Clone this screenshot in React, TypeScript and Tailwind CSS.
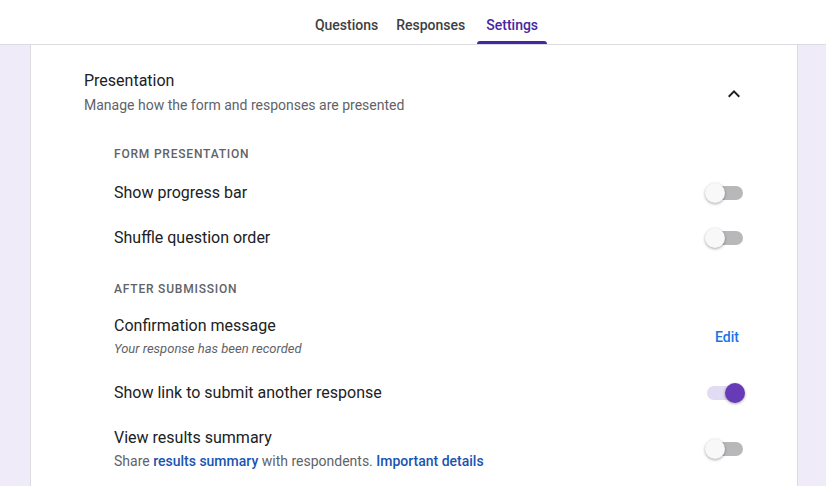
const Toggle = ({ on = false }: { on?: boolean }) => (
  <div className="relative w-[40px] h-[20px] flex items-center">
    <div className={`w-[36px] h-[14px] rounded-full ml-[2px] ${on ? "bg-[#e1dbf3]" : "bg-[#b8b8bb]"}`} />
    <div
      className={`absolute top-0 w-[20px] h-[20px] rounded-full shadow-[0_1px_3px_rgba(0,0,0,0.35)] ${
        on ? "left-[20px] bg-[#673ab7]" : "left-0 bg-[#f8f8f8]"
      }`}
    />
  </div>
);

const Section = ({ label, extra = "" }: { label: string; extra?: string }) => (
  <div className={`h-[38px] pt-[6px] text-[12px] font-medium tracking-[0.8px] text-[#5f6368] flex items-center ${extra}`}>
    {label}
  </div>
);

const Row = ({ title, h = "h-[45px]", children }: { title: string; h?: string; children: React.ReactNode }) => (
  <div className={`${h} flex items-center justify-between pr-[52px]`}>
    <span className="text-[16px] text-[#202124]">{title}</span>
    {children}
  </div>
);

export default function App() {
  return (
    <div className="w-[826px] h-[486px] overflow-hidden bg-[#f0ebf8] font-[Roboto]">
      <div className="h-[45px] bg-white border-b border-[#dadce0] flex justify-center items-end">
        <div className="flex gap-[6px] ml-[30px]">
          <div className="px-[6px] h-[45px] pt-[8px] flex items-center text-[14px] font-medium text-[#3c4043]">Questions</div>
          <div className="px-[6px] h-[45px] pt-[8px] flex items-center text-[14px] font-medium text-[#3c4043]">Responses</div>
          <div className="relative px-[9px] h-[45px] pt-[8px] flex items-center text-[14px] font-medium text-[#4527a0]">
            Settings
            <div className="absolute bottom-0 left-0 right-0 h-[3px] rounded-t bg-[#4527a0]" />
          </div>
        </div>
      </div>
      <div className="ml-[30px] w-[768px] h-[441px] bg-white border-x border-[#dadce0] pl-[53px] pt-[25px]">
        <div className="flex justify-between pr-[53px]">
          <div>
            <div className="text-[16px] leading-[22px] text-[#202124]">Presentation</div>
            <div className="text-[14px] leading-[20px] mt-[3px] text-[#5f6368]">Manage how the form and responses are presented</div>
          </div>
          <svg width="24" height="24" viewBox="0 0 24 24" className="mt-[12px] mr-[-2px]">
            <path d="M7.4 15.4 12 10.8l4.6 4.6L18 14l-6-6-6 6z" fill="#202124" />
          </svg>
        </div>
        <div className="pl-[30px] mt-[17px]">
          <Section label="FORM PRESENTATION" />
          <Row title="Show progress bar"><Toggle /></Row>
          <Row title="Shuffle question order"><Toggle /></Row>
          <Section label="AFTER SUBMISSION" extra="mt-[7px]" />
          <div className="h-[64px] flex items-center justify-between pr-[52px]">
            <div>
              <div className="text-[16px] leading-[22px] text-[#202124]">Confirmation message</div>
              <div className="text-[13px] italic leading-[20px] mt-[2px] text-[#5f6368]">Your response has been recorded</div>
            </div>
            <span className="text-[14px] font-medium text-[#1a73e8] mr-[6px]">Edit</span>
          </div>
          <Row title="Show link to submit another response" h="h-[48px]"><Toggle on /></Row>
          <div className="h-[64px] flex items-center justify-between pr-[52px]">
            <div>
              <div className="text-[16px] leading-[22px] text-[#202124]">View results summary</div>
              <div className="text-[14px] leading-[20px] mt-[2px] text-[#5f6368]">
                Share <span className="text-[#1a54b0] font-medium">results summary</span> with respondents.{" "}
                <span className="text-[#1a54b0] font-medium">Important details</span>
              </div>
            </div>
            <Toggle />
          </div>
        </div>
      </div>
    </div>
  );
}
